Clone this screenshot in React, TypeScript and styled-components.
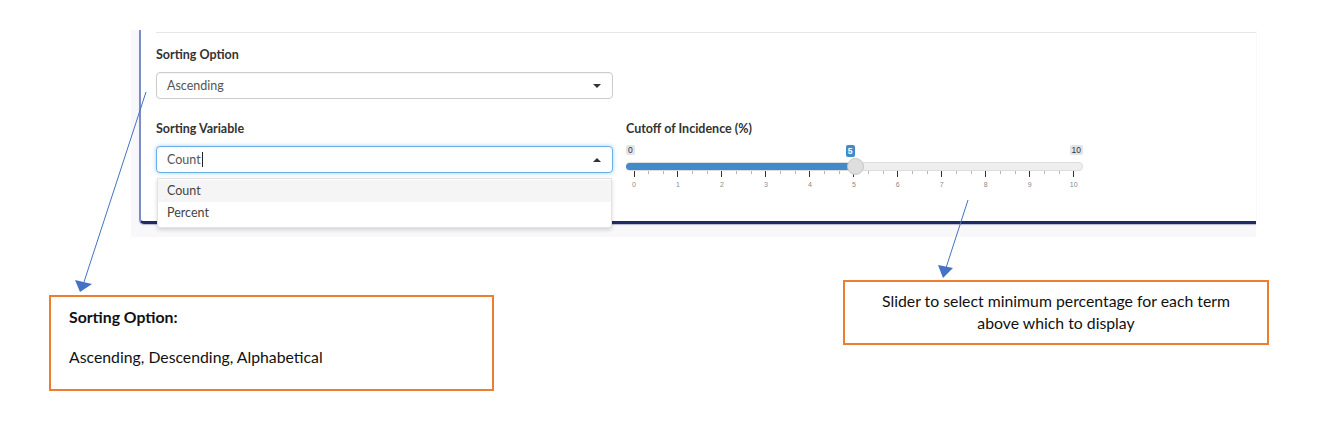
import styled, { createGlobalStyle } from 'styled-components';

const GlobalStyle = createGlobalStyle`
  html, body {
    margin: 0;
    padding: 0;
    background: #ffffff;
  }
  body {
    width: 1339px;
    height: 436px;
    overflow: hidden;
    position: relative;
  }
`;

const TICKS = Array.from({ length: 31 }, (_, i) => i);

const App = () => {
  return (
    <Page>
      <GlobalStyle />
      <Shot>
        <Card>
          <Rule />
          <Field>
            <Label>Sorting Option</Label>
            <Select>
              <span>Ascending</span>
              <Caret />
            </Select>
          </Field>

          <Columns>
            <Field>
              <Label>Sorting Variable</Label>
              <SelectHolder>
                <Select $focused>
                  <span>
                    Count<TextCursor />
                  </span>
                  <Caret $up />
                </Select>
                <Menu>
                  <MenuItem $active>Count</MenuItem>
                  <MenuItem>Percent</MenuItem>
                </Menu>
              </SelectHolder>
            </Field>

            <Field>
              <Label>Cutoff of Incidence (%)</Label>
              <Slider>
                <Badges>
                  <Badge>0</Badge>
                  <Badge $current>5</Badge>
                  <Badge>10</Badge>
                </Badges>
                <Track>
                  <Fill style={{ width: '50%' }} />
                  <Handle />
                </Track>
                <Grid>
                  {TICKS.map((i) => (
                    <TickCol key={i}>
                      <TickLine $major={i % 3 === 0} />
                      {i % 3 === 0 && <TickText>{i / 3}</TickText>}
                    </TickCol>
                  ))}
                </Grid>
              </Slider>
            </Field>
          </Columns>
        </Card>
      </Shot>

      <Callouts>
        <CalloutLeft>
          <CalloutTitle>Sorting Option:</CalloutTitle>
          <CalloutText>Ascending, Descending, Alphabetical</CalloutText>
        </CalloutLeft>
        <CalloutRight>
          Slider to select minimum percentage for each term
          <br />
          above which to display
        </CalloutRight>
      </Callouts>

      <Arrows width="1339" height="436" viewBox="0 0 1339 436">
        <line x1="146" y1="92" x2="84" y2="282" stroke="#4472c4" strokeWidth="1" />
        <polygon points="80,292 75,280 92,284" fill="#4472c4" />
        <line x1="968" y1="200" x2="946" y2="268" stroke="#4472c4" strokeWidth="1" />
        <polygon points="943,278 938,265 953,268" fill="#4472c4" />
      </Arrows>
    </Page>
  );
};

const Page = styled.div`
  position: relative;
  width: 1339px;
  height: 436px;
  padding-top: 30px;
  box-sizing: border-box;
  font-family: Lato, 'Noto Sans', sans-serif;
`;

const Shot = styled.div`
  margin-left: 131px;
  width: 1125px;
  height: 207px;
  background: #f8f8fa;
  padding-left: 8px;
  box-sizing: border-box;
`;

const Card = styled.div`
  height: 194px;
  background: #ffffff;
  border-left: 2px solid #7d8cc9;
  border-bottom: 3px solid #1f2b63;
  border-bottom-left-radius: 5px;
  box-shadow: 0 1px 1px rgba(31, 43, 99, 0.3);
  padding: 2px 0 0 15px;
  box-sizing: border-box;
`;

const Rule = styled.div`
  height: 1px;
  background: #e6e6e6;
  margin-bottom: 14px;
`;

const Field = styled.div`
  display: flex;
  flex-direction: column;
  width: 457px;
`;

const Label = styled.div`
  font-weight: 700;
  font-size: 12.5px;
  line-height: 16px;
  color: #333333;
  margin-bottom: 9px;
`;

const Columns = styled.div`
  display: grid;
  grid-template-columns: 457px 457px;
  column-gap: 13px;
  margin-top: 22px;
`;

const SelectHolder = styled.div`
  position: relative;
`;

const Select = styled.div<{ $focused?: boolean }>`
  height: 27px;
  border: 1px solid ${(p) => (p.$focused ? '#66afe9' : '#cccccc')};
  border-radius: 4px;
  box-shadow: ${(p) =>
    p.$focused ? '0 0 4px rgba(102, 175, 233, 0.6)' : 'inset 0 1px 1px rgba(0,0,0,0.04)'};
  display: flex;
  align-items: center;
  justify-content: space-between;
  padding: 0 11px 0 10px;
  font-size: 12.5px;
  color: #555555;
  box-sizing: border-box;
  background: #ffffff;
`;

const TextCursor = styled.span`
  display: inline-block;
  width: 1px;
  height: 15px;
  background: #222222;
  vertical-align: -3px;
  margin-left: 1px;
`;

const Caret = styled.span<{ $up?: boolean }>`
  width: 0;
  height: 0;
  border-left: 4px solid transparent;
  border-right: 4px solid transparent;
  ${(p) => (p.$up ? 'border-bottom: 4px solid #333;' : 'border-top: 4px solid #333;')}
`;

const Menu = styled.div`
  position: absolute;
  top: 32px;
  left: 1px;
  right: 1px;
  background: #ffffff;
  border: 1px solid #e2e2e2;
  border-radius: 0 0 3px 3px;
  box-shadow: 0 2px 4px rgba(0, 0, 0, 0.15);
  padding: 1px 0 3px;
  z-index: 2;
`;

const MenuItem = styled.div<{ $active?: boolean }>`
  height: 22px;
  line-height: 22px;
  padding-left: 9px;
  font-size: 12.5px;
  color: #444444;
  background: ${(p) => (p.$active ? '#f5f5f5' : 'transparent')};
`;

const Slider = styled.div`
  display: flex;
  flex-direction: column;
  width: 457px;
`;

const Badges = styled.div`
  display: flex;
  justify-content: space-between;
  align-items: flex-start;
  height: 13px;
  margin-top: -1px;
`;

const Badge = styled.span<{ $current?: boolean }>`
  font-family: 'Liberation Sans', Arial, sans-serif;
  font-size: 8.5px;
  line-height: 10px;
  padding: ${(p) => (p.$current ? '1px 2px' : '0 2px')};
  border-radius: 2px;
  background: ${(p) => (p.$current ? '#428bca' : '#e1e4e9')};
  color: ${(p) => (p.$current ? '#ffffff' : '#333333')};
  font-weight: ${(p) => (p.$current ? 700 : 400)};
  margin-left: ${(p) => (p.$current ? '-4px' : '0')};
`;

const Track = styled.div`
  position: relative;
  height: 7px;
  margin-top: 4px;
  border: 1px solid #dddddd;
  border-radius: 4px;
  background: #eeeeee;
`;

const Fill = styled.div`
  height: 100%;
  background: #428bca;
  border-radius: 4px 0 0 4px;
  margin-left: -1px;
`;

const Handle = styled.div`
  position: absolute;
  left: 50%;
  top: 50%;
  width: 17px;
  height: 17px;
  margin: -9px 0 0 -8px;
  border-radius: 50%;
  background: #dedede;
  border: 1px solid #c6c6c6;
  box-sizing: border-box;
`;

const Grid = styled.div`
  display: flex;
  justify-content: space-between;
  margin: 0 9px 0 8px;
`;

const TickCol = styled.div`
  width: 0;
  display: flex;
  flex-direction: column;
  align-items: center;
`;

const TickLine = styled.span<{ $major?: boolean }>`
  flex: none;
  width: 1px;
  height: ${(p) => (p.$major ? '6px' : '3px')};
  background: ${(p) => (p.$major ? '#333333' : '#b5b5b5')};
`;

const TickText = styled.span`
  font-family: 'Liberation Sans', Arial, sans-serif;
  font-size: 7px;
  line-height: 8px;
  margin-top: 4px;
  color: #8a8a8a;
`;

const Callouts = styled.div`
  display: flex;
  align-items: flex-start;
  margin-top: 43px;
  padding-left: 49px;
  gap: 349px;
  font-family: Lato, 'Noto Sans', sans-serif;
  font-size: 15.8px;
  color: #111111;
`;

const CalloutLeft = styled.div`
  width: 445px;
  height: 96px;
  margin-top: 15px;
  border: 2px solid #ed7d31;
  padding: 10px 18px 0;
  box-sizing: border-box;
`;

const CalloutTitle = styled.div`
  font-weight: 700;
  line-height: 20px;
`;

const CalloutText = styled.div`
  line-height: 20px;
  margin-top: 20px;
`;

const CalloutRight = styled.div`
  width: 426px;
  height: 65px;
  border: 2px solid #ed7d31;
  padding-top: 8px;
  box-sizing: border-box;
  text-align: center;
  line-height: 22px;
`;

const Arrows = styled.svg`
  position: absolute;
  left: 0;
  top: 0;
  pointer-events: none;
  z-index: 3;
`;

export default App;
